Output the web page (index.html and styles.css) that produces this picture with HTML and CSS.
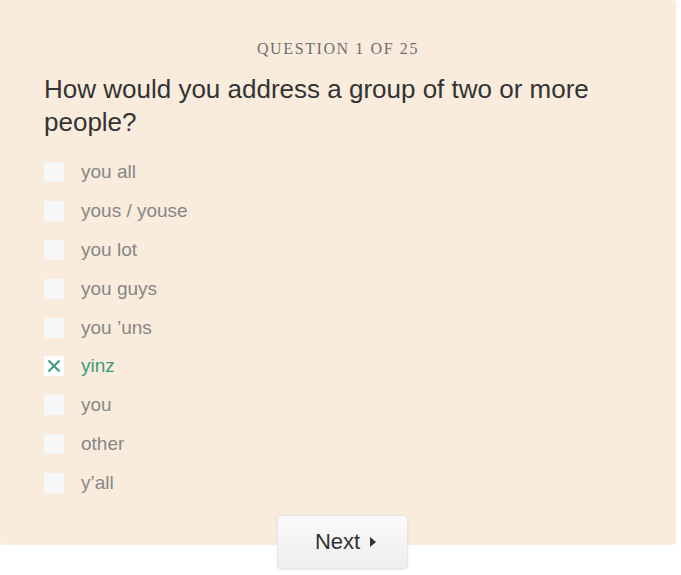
FILE: index.html
```html
<!DOCTYPE html>
<html lang="en">
  <head>
    <meta charset="UTF-8" />
    <title>Quiz</title>
    <link rel="stylesheet" href="styles.css">
  </head>
  <body>
    <div class="quiz">
      <div class="panel">
        <div class="counter">Question 1 of 25</div>
        <h2 class="question">How would you address a group of two or more people?</h2>
        <ul class="answers">
          <li class="answer"><span class="box"></span>you all</li>
          <li class="answer"><span class="box"></span>yous / youse</li>
          <li class="answer"><span class="box"></span>you lot</li>
          <li class="answer"><span class="box"></span>you guys</li>
          <li class="answer"><span class="box"></span>you ’uns</li>
          <li class="answer selected">
            <span class="box">
              <svg width="14" height="14" viewBox="0 0 14 14">
                <path d="M1.5 1.5 L12.5 12.5 M12.5 1.5 L1.5 12.5" stroke="#3d9c78" stroke-width="2" fill="none" />
              </svg>
            </span>yinz
          </li>
          <li class="answer"><span class="box"></span>you</li>
          <li class="answer"><span class="box"></span>other</li>
          <li class="answer"><span class="box"></span>y’all</li>
        </ul>
      </div>
      <div class="actions">
        <button class="next">Next <span class="arrow"></span></button>
      </div>
    </div>
  </body>
</html>
```

FILE: styles.css
```css
body {
  margin: 0;
  background: #fff;
  font-family: "Liberation Sans", Arial, sans-serif;
}
.quiz {
  width: 676px;
  padding-bottom: 10px;
}
.panel {
  background-color: #f9ecdd;
  border-radius: 0 4px 4px 4px;
  padding: 40px 44px 0;
  height: 505px;
}
.counter {
  text-align: center;
  font-family: "Liberation Serif", serif;
  text-transform: uppercase;
  font-size: 16px;
  letter-spacing: 1.6px;
  color: #6f6f6f;
  margin-left: -44px;
  margin-right: -44px;
}
.question {
  margin: 15px 0 14px;
  font-weight: normal;
  font-size: 26px;
  line-height: 33px;
  color: #333;
}
.answers {
  list-style: none;
  margin: 0;
  padding: 0;
}
.answer {
  display: flex;
  align-items: center;
  height: 38.8px;
  font-size: 19px;
  color: #878787;
}
.box {
  width: 20px;
  height: 20px;
  background: #f7f7f7;
  margin-right: 17px;
  display: flex;
  align-items: center;
  justify-content: center;
}
.selected {
  color: #3d9c78;
}
.selected .box {
  background: #fff;
}
.actions {
  display: flex;
  justify-content: center;
  margin-top: -30px;
  position: relative;
  padding-left: 9px;
}
.next {
  width: 131px;
  height: 54px;
  border: 1px solid #e6e6e6;
  border-radius: 4px;
  background: linear-gradient(#fafafa, #eeeeee);
  box-shadow: 0 1px 2px rgba(0, 0, 0, 0.08);
  font-family: "Liberation Sans", Arial, sans-serif;
  font-size: 22px;
  color: #333;
  display: flex;
  align-items: center;
  justify-content: center;
  gap: 10px;
  padding: 0 0 0 6px;
}
.arrow {
  width: 0;
  height: 0;
  border-top: 5px solid transparent;
  border-bottom: 5px solid transparent;
  border-left: 6px solid #333;
}
```
